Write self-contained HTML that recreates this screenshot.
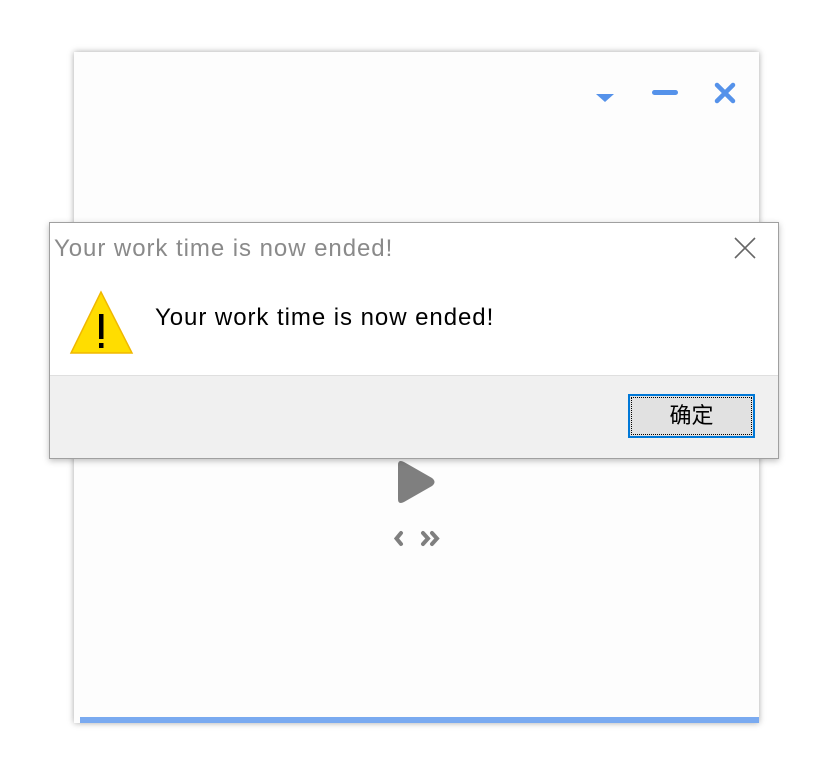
<!DOCTYPE html>
<html><head><meta charset="utf-8"><style>
body{margin:0;width:826px;height:770px;background:#fff;position:relative;overflow:hidden;font-family:"Liberation Sans","Noto Sans CJK SC",sans-serif}
.win{position:absolute;left:74px;top:52px;width:685px;height:671px;background:#fdfdfd;box-shadow:0 0 6px rgba(0,0,0,.35)}
.bar{position:absolute;left:6px;right:0;bottom:0;height:6px;background:#7aaaf0}
.dlg{position:absolute;left:49px;top:222px;width:728px;height:235px;background:#fff;border:1px solid #a0a0a0;box-shadow:0 2px 6px rgba(0,0,0,.25)}
.title{position:absolute;left:4px;top:12px;font-size:24px;letter-spacing:0.95px;color:#8a8a8a}
.msg{position:absolute;left:105px;top:81px;font-size:24px;letter-spacing:0.95px;color:#000}
.foot{position:absolute;left:0;right:0;top:152px;bottom:0;background:#f0f0f0;border-top:1px solid #dfdfdf}
.btn{position:absolute;left:578px;top:18px;width:123px;height:40px;border:2px solid #0078d7;background:#e1e1e1;box-sizing:content-box;font-size:22px;text-align:center;line-height:40px;outline:1px dotted #000;outline-offset:-4px}
</style></head><body>
<div class="win">
<svg style="position:absolute;left:520px;top:30px" width="150" height="30">
<path d="M2 12h18l-9 8z" fill="#5592ea"/>
<rect x="58" y="8" width="26" height="5" rx="2.5" fill="#5592ea"/>
<path d="M123 3l16 16M139 3l-16 16" stroke="#5592ea" stroke-width="4.5" stroke-linecap="round"/>
</svg>
<svg style="position:absolute;left:320px;top:405px" width="80" height="95">
<path d="M4 8q0-6 6-3l28 16q5 4 0 8l-28 16q-6 3-6-3z" fill="#7f7f7f"/>
<path d="M7 76l-4.5 5.5 4.5 5.5M29 76l5 5.5-5 5.5M38 76l5 5.5-5 5.5" stroke="#7f7f7f" stroke-width="4" fill="none" stroke-linecap="round"/>
</svg>
<div class="bar"></div>
</div>
<div class="dlg">
<div class="title">Your work time is now ended!</div>
<svg style="position:absolute;left:684px;top:14px" width="22" height="22"><path d="M1 1l20 20M21 1L1 21" stroke="#666" stroke-width="1.6"/></svg>
<svg style="position:absolute;left:19px;top:67px" width="66" height="65"><path d="M32 2L2 63h61z" fill="#ffdd00" stroke="#f0b800" stroke-width="1.5"/><rect x="30" y="24" width="4.5" height="25" fill="#000"/><rect x="30" y="53" width="4.5" height="5" fill="#000"/></svg>
<div class="msg">Your work time is now ended!</div>
<div class="foot"><div class="btn">确定</div></div>
</div>
</body></html>
